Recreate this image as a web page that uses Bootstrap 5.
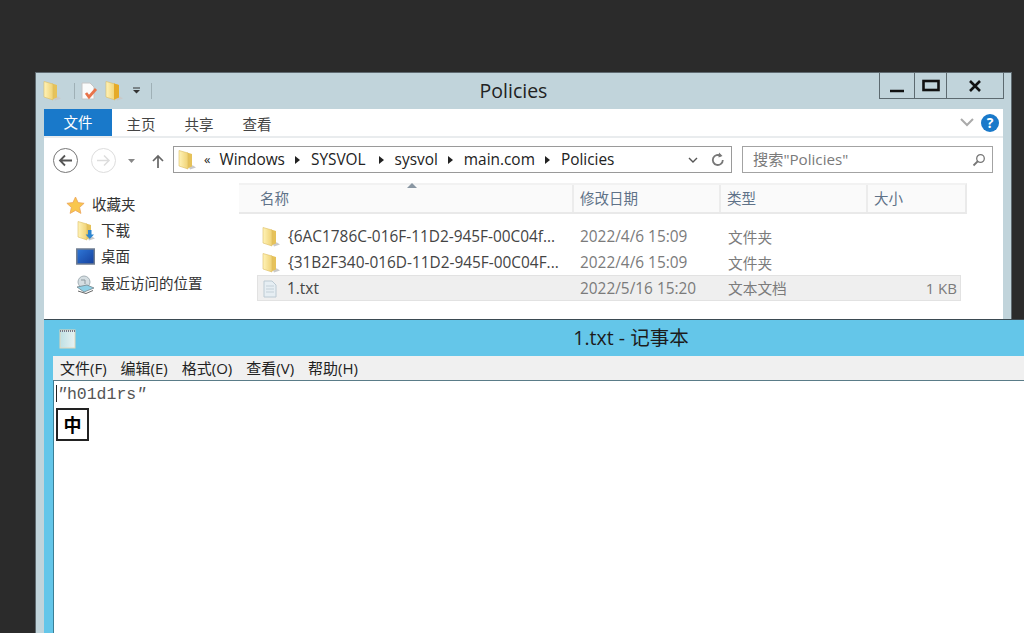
<!DOCTYPE html>
<html lang="zh"><head><meta charset="utf-8"><title>Policies</title>
<link href="https://cdn.jsdelivr.net/npm/bootstrap@5.3.0/dist/css/bootstrap.min.css" rel="stylesheet">
<style>
html,body{margin:0;height:100%;overflow:hidden;background:#2b2b2b}
body{font-family:"Open Sans","Noto Sans CJK SC",sans-serif;font-size:14px;color:#333;width:1024px;height:633px;position:relative}
svg{filter:blur(.35px)}
.win{position:absolute;box-sizing:border-box}
.ex{left:35px;top:72px;width:977px;height:570px;background:#c1d4db;border:1px solid #5f6a70;border-bottom:0}
.qat{height:36px;padding-left:7px;gap:5px}
.qsep{width:1px;height:16px;background:#9fb0b6}
.wt{position:absolute;left:0;right:20px;top:3px;text-align:center;font-size:19.5px;color:#222}
.caps{position:absolute;left:843px;top:0;width:125px;height:26px;border:1px solid #5d6a70;border-top:0;display:flex}
.caps>div{display:flex;align-items:center;justify-content:center;border-right:1px solid #5d6a70}
.caps>div:last-child{border:0}
.pane{margin-left:8px;width:959px;background:#fff;height:534px;position:relative}
.tabs{height:29px;border-bottom:2px solid #e9ecee;font-size:14.5px;color:#444}
.ftab{width:68px;height:27px;background:#1979ca;color:#fff;text-align:center;line-height:28px}
.rtab{width:58px;text-align:center;line-height:31px}
.ribr{margin-left:auto;gap:7px;padding-right:4px}
.help{width:18px;height:18px;border-radius:50%;background:#1979ca;color:#fff;font-weight:700;font-size:14px;line-height:18px;text-align:center}
.navb{height:45px;padding-left:9px;position:relative}
.circ{width:25px;height:25px;border-radius:50%;border:1.500px solid #777;display:flex;align-items:center;justify-content:center}
.circ.off{border-color:#ddd;margin-left:13px}
.addr{position:absolute;left:129px;top:8px;width:559px;height:27px;border:1px solid #9a9a9a;display:flex;align-items:center;font-size:15.400px;color:#222;padding-left:4px}
.addr span.t{margin-right:10px}
.addr span.t.wide{margin-right:13px}
.tri{width:0;height:0;border-left:5px solid #222;border-top:4px solid transparent;border-bottom:4px solid transparent;margin-right:11px}
.srch{position:absolute;left:698px;top:8px;width:251px;height:27px;border:1px solid #a3a3a3;display:flex;align-items:center;justify-content:space-between;padding:0 6px 0 10px;color:#7a7a7a;font-size:15.200px}
.fbody{position:relative;height:440px}
.side{position:absolute;left:0;top:0;width:195px;font-size:14.500px;color:#333}
.sitem{height:26px;display:flex;align-items:center;gap:6px;position:absolute}
.list{position:absolute;left:195px;top:0;width:728px}
.lhead{height:31px;background:#fafafa;border-bottom:2px solid #e9e9e9;border-top:2px solid #f2f2f2;border-right:2px solid #eaeaea;display:flex;color:#5f7288;font-size:14.500px;position:relative}
.lhead>div{padding-left:21px;line-height:27px;border-right:2px solid #ececec;box-sizing:border-box;flex:none}
.lhead>div+div{padding-left:6px}
.c1{width:335px}.c2{width:147px}.c3{width:147px}.c4{width:97px;border-right:0!important}
.rows{padding:9px 0 0 18px;width:722px;}
.rw{height:26px;display:flex;align-items:center;font-size:15.400px;color:#7b7b7b;position:relative;box-sizing:border-box;padding-top:2px}
.rw.sel{background:#efefef;border:1px solid #e2e2e2;padding-top:1px}
.rw .n{width:316px;display:flex;gap:8px;align-items:center;color:#444;padding-left:5px;white-space:nowrap;flex:none}
.rw.sel .n{width:315px;padding-left:3px}
.rw .d{width:148px;flex:none;padding-left:7px}
.rw .y{width:147px;flex:none;padding-left:7px;font-size:14.700px}
.rw .s{flex:1;text-align:right;padding-right:3px;font-size:15px}
.np{left:44px;top:319px;width:990px;height:330px;background:#64c6e9;border-top:1px solid #3b4a52}
.npt{height:36px;text-align:center;font-size:19.500px;line-height:36px;color:#1c1c1c;position:relative}
.npt span{position:relative;left:92px}
.npico{position:absolute;left:13px;top:8px}
.npin{margin-left:9px;background:#fff}
.npm{height:25px;background:#f0f0f0;border-bottom:1px solid #5a7c88;display:flex;gap:14px;padding-left:7px;font-size:15px;line-height:25px;color:#222}
.npc{height:260px;position:relative;font-family:"Liberation Mono",monospace;font-size:16.500px;color:#555;padding:2px 0 0 2px;line-height:23px;border-left:1px solid #3b7f96}
.caret{display:inline-block;width:1px;height:17px;background:#222;vertical-align:-3px}
.ime{position:absolute;left:2px;top:27px;width:33px;height:33px;border:2px solid #222;font-family:"Noto Sans CJK SC",sans-serif;font-size:18px;font-weight:700;color:#000;text-align:center;line-height:28px;background:#fff}
</style></head><body>
<svg width="0" height="0" class="d-block"><defs>
<linearGradient id="fg" x1="0" x2="1"><stop offset="0" stop-color="#fff3b8"/><stop offset="1" stop-color="#f0d274"/></linearGradient>
<linearGradient id="dk" x1="0" y1="0" x2="1" y2="1"><stop offset="0" stop-color="#2f78d8"/><stop offset="1" stop-color="#143f9c"/></linearGradient>
<linearGradient id="pg" x1="0" x2="1"><stop offset="0" stop-color="#bfe0e4"/><stop offset="1" stop-color="#e8f2f2"/></linearGradient>
<g id="fld"><path d="M10 15l5 .5 3 2-6 2z" fill="#c9c9c9"/><path d="M9 2.500l5 1.500v12.500l-5 2z" fill="#e6c25a"/><path d="M1 .5l9 2.500v16l-9-3z" fill="url(#fg)" stroke="#dcbc62" stroke-width=".6"/></g>
</defs></svg>

<div class="win ex">
 <div class="d-flex align-items-center qat">
  <svg width="18" height="20"><use href="#fld"/></svg><div class="qsep ms-2"></div>
  <svg width="20" height="20"><path d="M2 2h8l4 4v12H2z" fill="#fbfbfb" stroke="#c6c6c6"/><path d="M6 12l3 4 7-8" fill="none" stroke="#e8734a" stroke-width="2.800"/></svg>
  <svg width="18" height="20"><use href="#fld"/><path d="M9 2.500l5 1.500v12.500l-5 2z" fill="#e5aa28"/></svg>
  <svg width="10" height="10" class="ms-1"><path d="M1 2h7" stroke="#333"/><path d="M1 4h7l-3.500 3.500z" fill="#333"/></svg><div class="qsep ms-1"></div>
 </div>
 <div class="wt">Policies</div>
 <div class="caps">
  <div style="width:35px"><svg width="16" height="20"><path d="M1 15h14" stroke="#111" stroke-width="2.500"/></svg></div>
  <div style="width:32px"><svg width="18" height="14"><rect x="1.500" y="2" width="15" height="9" fill="none" stroke="#111" stroke-width="2.600"/></svg></div>
  <div style="flex:1"><svg width="14" height="14"><path d="M2 2l10 10M12 2L2 12" stroke="#111" stroke-width="2.600"/></svg></div>
 </div>
 <div class="pane">
  <div class="tabs d-flex">
   <div class="ftab">文件</div><div class="rtab">主页</div><div class="rtab">共享</div><div class="rtab">查看</div>
   <div class="d-flex align-items-center ribr"><svg width="14" height="10"><path d="M1 1l6 6 6-6" fill="none" stroke="#aaa" stroke-width="2"/></svg><div class="help">?</div></div>
  </div>
  <div class="navb">
   <div class="d-flex align-items-center" style="height:45px">
    <div class="circ"><svg width="15" height="13"><path d="M14 6.500H3M7 1.500l-5 5 5 5" fill="none" stroke="#555" stroke-width="1.800"/></svg></div>
    <div class="circ off"><svg width="15" height="13"><path d="M1 6.500h11M8 1.500l5 5-5 5" fill="none" stroke="#ddd" stroke-width="1.500"/></svg></div>
    <svg width="10" height="6" style="margin-left:11px"><path d="M1 1h7l-3.500 4z" fill="#888"/></svg>
    <svg width="14" height="16" style="margin-left:14px"><path d="M7 15V3M2 8l5-5 5 5" fill="none" stroke="#666" stroke-width="1.700"/></svg>
   </div>
   <div class="addr"><svg width="18" height="20"><use href="#fld"/></svg><span class="t" style="font-size:13px;margin-left:8px;margin-right:9px">«</span><span class="t">Windows</span><div class="tri"></div><span class="t wide">SYSVOL</span><div class="tri"></div><span class="t">sysvol</span><div class="tri"></div><span class="t">main.com</span><div class="tri"></div><span class="t">Policies</span>
    <svg width="10" height="7" style="position:absolute;left:514px;top:10px"><path d="M1 1l4 4 4-4" fill="none" stroke="#555" stroke-width="1.400"/></svg>
    <svg width="16" height="16" style="position:absolute;left:536px;top:5px"><path d="M12.800 8a5 5 0 1 1-2-4" fill="none" stroke="#777" stroke-width="1.800"/><path d="M9 .5l3.500 3.500-4 1.500z" fill="#777"/></svg>
   </div>
   <div class="srch"><span>搜索"Policies"</span><svg width="14" height="14"><circle cx="8.500" cy="5.500" r="3.800" fill="none" stroke="#777" stroke-width="1.300"/><path d="M6 8l-4.500 4.500" stroke="#777" stroke-width="1.800"/></svg></div>
  </div>
  <div class="fbody">
   <div class="side">
    <div class="sitem" style="left:22px;top:9px;gap:7px;"><svg width="19" height="19"><path d="M9.500 1l2.600 5.600 6 .7-4.500 4.100 1.300 6-5.400-3-5.400 3 1.300-6L.900 7.300l6-.7z" fill="#f9c74e" stroke="#eba35c" stroke-width=".8"/></svg><span>收藏夹</span></div>
    <div class="sitem" style="left:33px;top:35px"><svg width="18" height="20"><use href="#fld"/><path d="M11 9h3.500v4.500h2.500l-4.200 4.500-4.200-4.500h2.400z" fill="#2d85cf"/></svg><span>下载</span></div>
    <div class="sitem" style="left:32px;top:61px"><svg width="19" height="18"><rect x=".8" y="1" width="17.500" height="15" fill="url(#dk)" stroke="#6f7c90" stroke-width="1.500"/></svg><span>桌面</span></div>
    <div class="sitem" style="left:32px;top:88px"><svg width="19" height="19"><circle cx="8" cy="7" r="6" fill="#d5dee2" stroke="#a3afb5"/><path d="M5 5h4v4" fill="none" stroke="#8b989e"/><path d="M1 12l10-2 7 3-10 4z" fill="#8fd0e6" stroke="#76858c" stroke-width=".8"/><path d="M2 16l8 2.500 7-3" fill="none" stroke="#666"/></svg><span>最近访问的位置</span></div>
   </div>
   <div class="list">
    <div class="lhead"><div class="c1">名称<svg width="10" height="5" style="position:absolute;left:168px;top:-2px"><path d="M0 5l5-5 5 5z" fill="#8a97a3"/></svg></div><div class="c2">修改日期</div><div class="c3">类型</div><div class="c4">大小</div></div>
    <div class="rows">
     <div class="rw"><div class="n"><svg width="18" height="20"><use href="#fld"/></svg>{6AC1786C-016F-11D2-945F-00C04f...</div><div class="d">2022/4/6 15:09</div><div class="y">文件夹</div></div>
     <div class="rw"><div class="n"><svg width="18" height="20"><use href="#fld"/></svg>{31B2F340-016D-11D2-945F-00C04F...</div><div class="d">2022/4/6 15:09</div><div class="y">文件夹</div></div>
     <div class="rw sel"><div class="n"><svg width="18" height="20"><path d="M3 2h8l4 4v12H3z" fill="#e6eef3" stroke="#bccad3"/><path d="M5 7h8M5 10h8M5 13h8" stroke="#c4d0d8"/></svg>1.txt</div><div class="d">2022/5/16 15:20</div><div class="y">文本文档</div><div class="s">1 KB</div></div>
    </div>
   </div>
  </div>
 </div>
</div>

<div class="win np">
 <svg class="npico" width="20" height="22"><rect x="3" y="2" width="15" height="18" fill="url(#pg)" stroke="#e4d6b8"/><path d="M3 3h15" stroke="#778" stroke-width="2" stroke-dasharray="1 1"/></svg>
 <div class="npt"><span>1.txt - 记事本</span></div>
 <div class="npin">
  <div class="npm"><span>文件(F)</span><span>编辑(E)</span><span>格式(O)</span><span>查看(V)</span><span>帮助(H)</span></div>
  <div class="npc"><span class="caret"></span><i>"</i>h01d1rs<i>"</i><div class="ime">中</div></div>
 </div>
</div>
</body></html>
